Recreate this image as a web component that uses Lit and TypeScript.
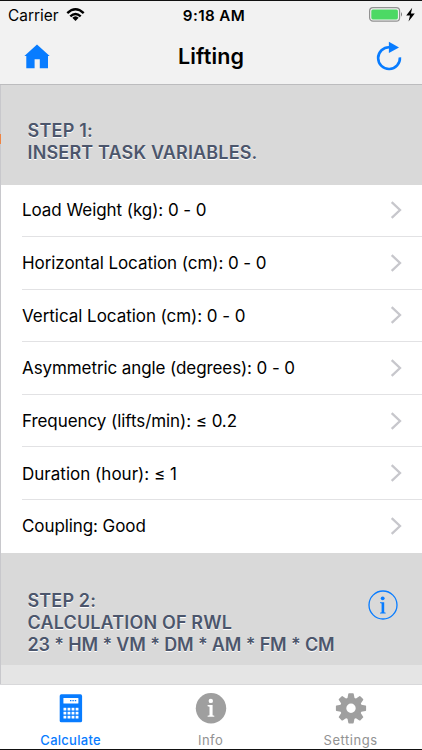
import { LitElement, html, css, svg } from "lit";
import { customElement } from "lit/decorators.js";

const ROWS: [string, number][] = [
  ["Load Weight (kg): 0 - 0", 184.5],
  ["Horizontal Location (cm): 0 - 0", 244.5],
  ["Vertical Location (cm): 0 - 0", 223.5],
  ["Asymmetric angle (degrees): 0 - 0", 273],
  ["Frequency (lifts/min): ≤ 0.2", 215],
  ["Duration (hour): ≤ 1", 155],
  ["Coupling: Good", 123.7],
];

const KEYS = [0, 1, 2, 3].flatMap((c) => [0, 1, 2].map((r) => [c, r]));

@customElement("app-root")
export class AppRoot extends LitElement {
  static styles = css`
    :host {
      display: flex;
      flex-direction: column;
      position: relative;
      box-sizing: border-box;
      width: 422px;
      height: 750px;
      overflow: hidden;
      background: #e5e5e5;
      border-top: 1px solid #111;
      border-bottom: 1px solid #111;
      font-family: Inter, "Liberation Sans", sans-serif;
      color: #000;
      white-space: nowrap;
    }
    svg { display: block; flex: none; }
    .top { height: 84px; background: #f2f2f2; border-bottom: 1px solid #bcbcbe; box-sizing: border-box; }
    .status {
      height: 28px;
      display: grid;
      grid-template-columns: 1fr auto 1fr;
      align-items: center;
      font-size: 15.4px;
    }
    .carrier { display: flex; align-items: center; gap: 7px; padding-left: 8px; }
    .time { font-weight: 600; font-size: 15.2px; padding-left: 6px; }
    .power { display: flex; justify-content: flex-end; padding-right: 6px; }
    .nav {
      height: 53px;
      display: grid;
      grid-template-columns: 1fr auto 1fr;
      align-items: center;
    }
    .home { padding: 1px 0 0 24px; }
    .reload { display: flex; justify-content: flex-end; padding-right: 20.5px; }
    .title { margin: 0; font-size: 21.5px; font-weight: 600; }
    .content { flex: 1; border-left: 1px solid #c8c8cc; }
    .step {
      box-sizing: border-box;
      display: flex;
      justify-content: space-between;
      background: #d9d9d9;
      padding: 34.5px 23px 0 26.5px;
      color: #4c566c;
      font-size: 18px;
      line-height: 22px;
      font-weight: 600;
      text-shadow: 0 1px 0 #fff;
    }
    .first { height: 99.5px; }
    .second { height: 112.5px; padding-top: 37px; }
    .info { margin-top: -1px; }
    .line { display: block; }
    .list { background: #fff; padding-left: 21px; height: 368px; display: grid; grid-template-rows: repeat(7, 1fr); }
    .row {
      display: flex;
      align-items: center;
      justify-content: space-between;
      padding-right: 20.4px;
      border-bottom: 1px solid #e2e2e4;
      font-size: 17px;
    }
    .row:nth-child(3) .fit, .row:nth-child(6) .fit { padding-top: 1px; }
    .row:last-child { border-bottom: 0; }
    .tabs {
      height: 65px;
      display: grid;
      grid-template-columns: repeat(3, 140px);
      padding-left: 0.6px;
      box-sizing: border-box;
      background: #fff;
      border-top: 1px solid #d8d8da;
      color: #929292;
      font-size: 13px;
    }
    .tab { display: flex; flex-direction: column; align-items: center; padding-top: 7px; gap: 8px; }
    .tab .fit { line-height: 16px; }
    .active { color: #087cff; font-weight: 500; }
    .marker { position: absolute; left: 0; top: 133px; width: 1px; height: 10px; background: #ee8443; }
  `;

  render() {
    return html`
      <header class="top">
        <div class="status">
          <div class="carrier">
            ${this.fit("Carrier", 50.5)}
            <svg width="19" height="14" viewBox="0 0 18 14" fill="none" stroke="#000" stroke-width="2.4">
              <path d="M.8 5.2Q9-2.5 17.2 5.2M3.8 8.3Q9 3.5 14.2 8.3" />
              <path d="M5.8 9.8Q9 6.8 12.2 9.8L9 13Z" fill="#000" stroke="none" />
            </svg>
          </div>
          <div class="time">${this.fit("9:18 AM", 62.5)}</div>
          <div class="power">
            <svg width="48" height="16" viewBox="0 0 48 16">
              <rect x="1.6" y="0.7" width="30" height="13.4" rx="3.4" fill="none" stroke="#929292" stroke-width="1.2" />
              <rect x="3.3" y="2.4" width="26.6" height="10" rx="1.6" fill="#4cd964" />
              <path d="M33 5Q35 7.4 33 9.8Z" fill="#777" />
              <path d="M44.2 .7L38.2 8.6H42L40.5 14.6L46.8 6.6H42.9Z" fill="#000" />
            </svg>
          </div>
        </div>
        <div class="nav">
          <div class="home">
            <svg width="26" height="25" viewBox="0 0 26 25" fill="#087cff">
              <path d="M13 .5L25.7 12H24V24.2H15.8V15.3H10.6V24.2H2.3V12H.4Z" />
            </svg>
          </div>
          <h1 class="title">${this.fit("Lifting", 66)}</h1>
          <div class="reload">
            <svg width="26" height="30" viewBox="0 0 26 30">
              <path d="M13.5 6.2A10.9 10.9 0 1 0 23.9 16.3" fill="none" stroke="#087cff" stroke-width="2.6" />
              <path d="M12.9 .8L23 6.4L12.9 12Z" fill="#087cff" />
            </svg>
          </div>
        </div>
      </header>
      <main class="content">
        <section class="step first">
          <div>
            ${this.line("STEP 1:", 65.5)} ${this.line("INSERT TASK VARIABLES.", 230)}
          </div>
        </section>
        <div class="list">
          ${ROWS.map(
            ([text, w]) => html`<div class="row">
              ${this.fit(text, w)}
              <svg width="12" height="18" viewBox="0 0 12 18" fill="none" stroke="#c7c7cc" stroke-width="2.3">
                <path d="M1.7 1.2L10 9L1.7 16.8" />
              </svg>
            </div>`
          )}
        </div>
        <section class="step second">
          <div>
            ${this.line("STEP 2:", 68.5)} ${this.line("CALCULATION OF RWL", 204.5)}
            ${this.line("23 * HM * VM * DM * AM * FM * CM", 307)}
          </div>
          <svg class="info" width="32" height="32" viewBox="0 0 32 32">
            <circle cx="16" cy="16" r="14" fill="none" stroke="#087cff" stroke-width="1.3" />
            <circle cx="15.7" cy="9.3" r="1.9" fill="#087cff" />
            <path d="M13 13.3H17.2V23.2L18.7 23.8V24.5H13V23.8L14.6 23.2V14.6L13 14.1Z" fill="#087cff" />
          </svg>
        </section>
      </main>
      <nav class="tabs">
        <div class="tab active">
          <svg width="30" height="32" viewBox="0 0 30 32">
            <rect x="3.7" y="2.3" width="22.4" height="28" rx="1.6" fill="currentColor" />
            <rect x="7.4" y="6" width="15" height="5.4" rx=".5" fill="#fff" />
            <path d="M14 8.6H21" stroke="#087cff" stroke-width="1.2" stroke-dasharray="1.4 1" />
            ${KEYS.map(([c, r]) => svg`<rect x=${7.5 + c * 4.05} y=${15.8 + r * 4} width="2.8" height="2.7" fill="#fff" />`)}
          </svg>
          ${this.fit("Calculate", 60.5)}
        </div>
        <div class="tab">
          <svg width="32" height="32" viewBox="0 0 32 32">
            <circle cx="16" cy="16.3" r="15.2" fill="#9f9f9f" />
            <circle cx="15.8" cy="8.9" r="2.2" fill="#fff" />
            <path d="M12.6 13H17.6V23.2L19.3 23.8V24.8H12.6V23.8L14.5 23.2V14.8L12.6 14.2Z" fill="#fff" />
          </svg>
          ${this.fit("Info", 25)}
        </div>
        <div class="tab">
          <svg width="32" height="32" viewBox="0 0 32 32" fill="#9f9f9f">
            <circle cx="16" cy="16.3" r="7.8" fill="none" stroke="#9f9f9f" stroke-width="6.2" />
            ${[0, 45, 90, 135, 180, 225, 270, 315].map(
              (a) => svg`<path transform="rotate(${a} 16 16.3)" d="M12.2 7.5L13.3 1.8Q13.4 1.2 14 1.2H18Q18.6 1.2 18.7 1.8L19.8 7.5Z" />`
            )}
          </svg>
          ${this.fit("Settings", 54)}
        </div>
      </nav>
      <div class="marker"></div>
    `;
  }

  private line(text: string, width: number) {
    return html`<span class="line">${this.fit(text, width)}</span>`;
  }

  private fit(text: string, width: number) {
    return html`<span class="fit" data-w=${width}>${text}</span>`;
  }

  // Tracks each label so that it fills its intended width.
  async firstUpdated() {
    await document.fonts.ready;
    this.renderRoot.querySelectorAll<HTMLElement>(".fit").forEach((el) => {
      const gap = Number(el.dataset.w) - el.getBoundingClientRect().width;
      el.style.letterSpacing = `${gap / el.textContent!.length}px`;
    });
  }
}
